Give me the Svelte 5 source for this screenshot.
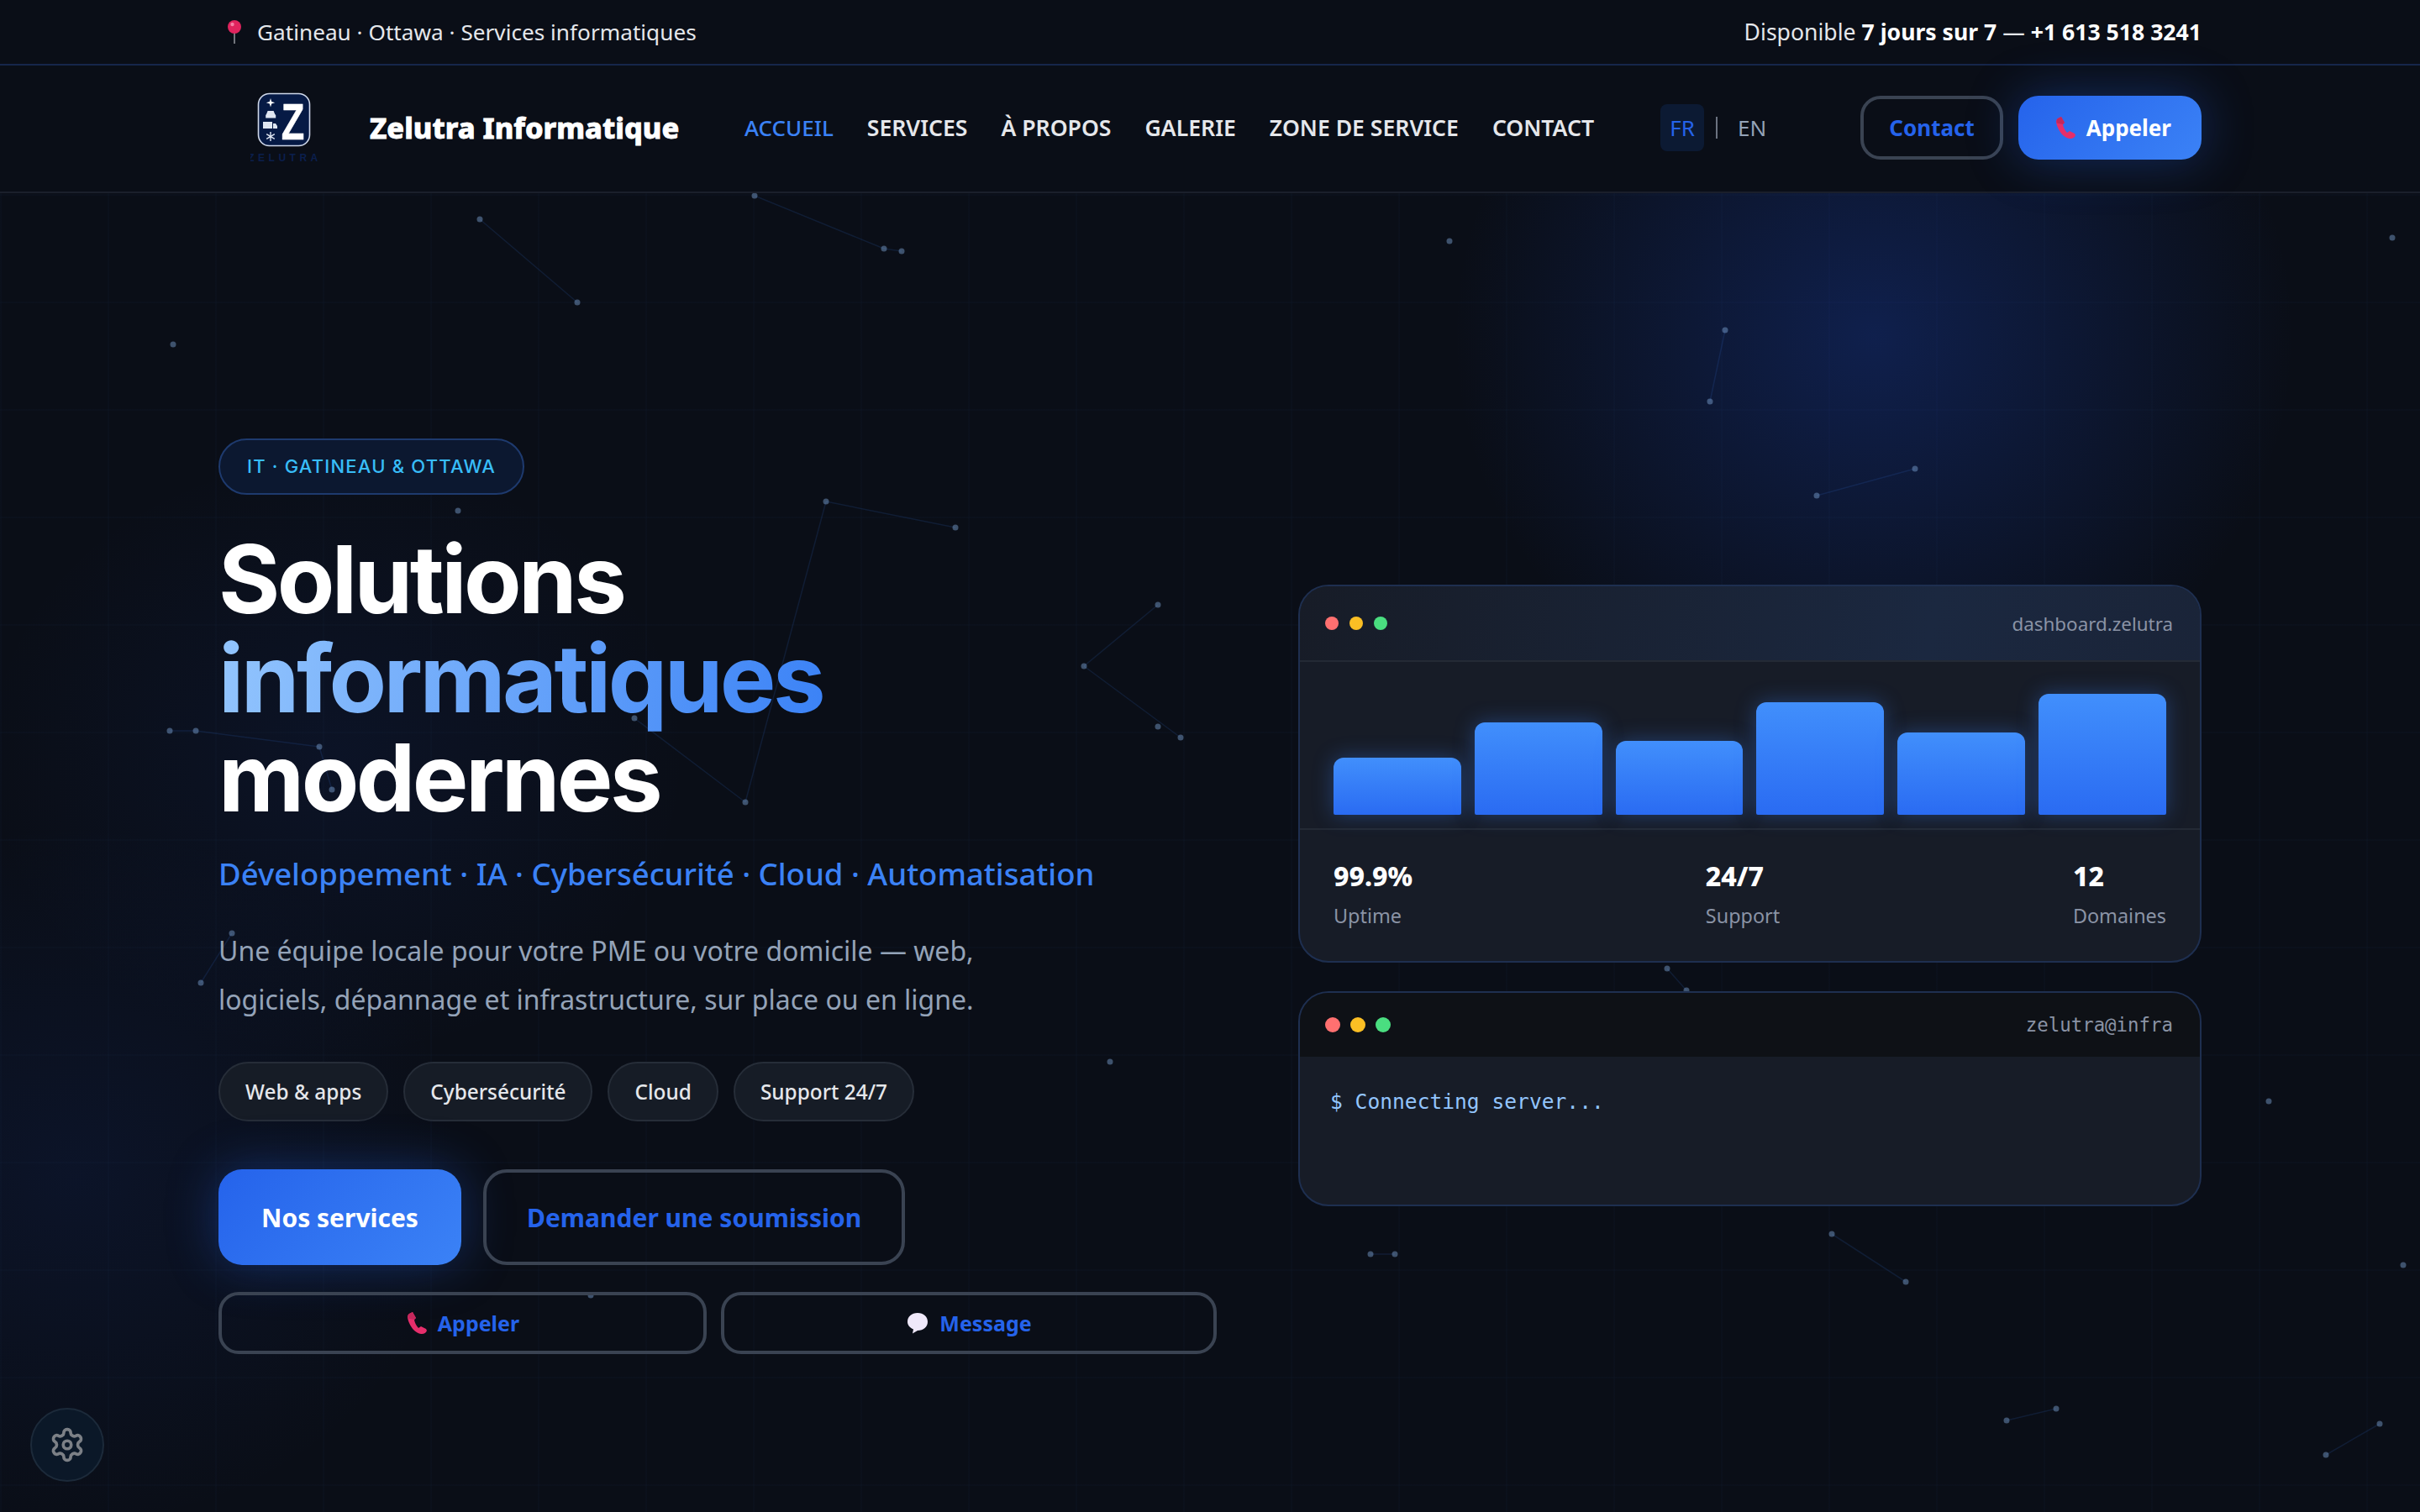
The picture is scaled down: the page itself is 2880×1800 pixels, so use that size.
<script>
  const links = ['ACCUEIL', 'SERVICES', 'À PROPOS', 'GALERIE', 'ZONE DE SERVICE', 'CONTACT'];
  const tags = ['Web & apps', 'Cybersécurité', 'Cloud', 'Support 24/7'];
  const bars = [68, 110, 88, 134, 98, 144];
  const stats = [
    { value: '99.9%', label: 'Uptime' },
    { value: '24/7', label: 'Support' },
    { value: '12', label: 'Domaines' }
  ];

  // network background, coordinates in page pixels
  const nodes = [
    [898, 233], [1052, 296], [1073, 299], [571, 261], [687, 360], [206, 410], [1725, 287], [2847, 283],
    [2053, 393], [2035, 478], [2279, 558], [2162, 590], [983, 597], [1137, 628], [887, 955], [545, 608],
    [1378, 720], [1290, 793], [1405, 878], [1378, 865], [233, 870], [202, 870], [380, 889], [395, 940],
    [755, 855], [276, 1111], [239, 1170], [1321, 1264], [1677, 1109], [1984, 1153], [2007, 1179],
    [2700, 1311], [2562, 1341], [2180, 1469], [2268, 1526], [1631, 1493], [1660, 1493], [2388, 1691], [2447, 1677],
    [2860, 1506], [2832, 1695], [2768, 1732], [703, 1542]
  ];
  const lines = [
    [898, 233, 1052, 296], [1052, 296, 1073, 299], [571, 261, 687, 360], [2053, 393, 2035, 478],
    [2279, 558, 2162, 590], [983, 597, 1137, 628], [983, 597, 887, 955], [1378, 720, 1290, 793],
    [1290, 793, 1405, 878], [202, 870, 233, 870], [233, 870, 380, 889],
    [380, 889, 395, 940], [755, 855, 887, 955], [276, 1111, 239, 1170], [1984, 1153, 2007, 1179],
    [2180, 1469, 2268, 1526], [1631, 1493, 1660, 1493], [2388, 1691, 2447, 1677], [2832, 1695, 2768, 1732]
  ];
</script>

{#snippet pin()}
  <svg class="emoji pin" viewBox="0 0 18 28" width="18" height="28">
    <rect x="8.200" y="12" width="1.600" height="16" fill="#8d8f96" />
    <ellipse cx="9" cy="8" rx="8" ry="8" fill="#e0245e" />
    <circle cx="6.500" cy="5" r="2.200" fill="#f47fa4" />
  </svg>
{/snippet}

{#snippet phone()}
  <svg class="emoji" viewBox="0 0 26 28" width="26" height="28">
    <path d="M8 1 L4 3 C1 5 2 9 4 14 C7 21 12 26 18 27 C21 27.600 24 26 25 23 L24 21 L18 18 L15 20 C12 17 10.500 13 10 10 L12 8 Z" fill="#e62e6b" />
    <path d="M8 1 L4 3 C2.500 4 2.200 6 2.600 8.500 L10 10 L12 8 Z" fill="#c4285c" />
  </svg>
{/snippet}

{#snippet trafficLights()}
  <div class="lights">
    <span class="light red"></span>
    <span class="light yellow"></span>
    <span class="light green"></span>
  </div>
{/snippet}

<div class="page">
  <svg class="network" width="2880" height="1800" viewBox="0 0 2880 1800">
    {#each lines as l}
      <line x1={l[0]} y1={l[1]} x2={l[2]} y2={l[3]} stroke="#3b82f6" stroke-opacity="0.13" stroke-width="1.5" />
    {/each}
    {#each nodes as n}
      <circle cx={n[0]} cy={n[1]} r="3.500" fill="#7fa6d8" fill-opacity="0.45" />
    {/each}
  </svg>

  <div class="topbar">
    <div class="wrap topbar-in">
      <span class="loc">{@render pin()} Gatineau · Ottawa · Services informatiques</span>
      <span class="avail">Disponible <b>7 jours sur 7</b> — <b>+1 613 518 3241</b></span>
    </div>
  </div>

  <header class="nav">
    <div class="wrap nav-in">
      <div class="logo">
        <svg width="90" height="90" viewBox="0 0 90 90">
          <g transform="translate(0 3)">
            <rect x="9.500" y="1.500" width="61" height="62" rx="13" fill="#061a45" stroke="#cfd8ea" stroke-width="1.600" />
            <text transform="translate(50.500 56) scale(0.74 1)" text-anchor="middle" font-family="Liberation Sans" font-weight="700" font-size="61" fill="#fff" stroke="#fff" stroke-width="0.600">Z</text>
            <path d="M24 7 l1.200 4 4 1.200 -4 1.200 -1.200 4 -1.200 -4 -4 -1.200 4 -1.200z" fill="#fff" />
            <path d="M19 26 l1.600 -4 h7 l1.600 4 l1 1 v3.500 h-12 v-3.500z" fill="#dfe6f2" />
            <path d="M15 35 h11 v8 h-11z M27 37 h3 l2 3 v3 h-5z" fill="#dfe6f2" />
            <path d="M24 47 v11 M19.200 49.700 l9.600 5.600 M28.800 49.700 l-9.600 5.600" stroke="#dfe6f2" stroke-width="1.400" />
            <text x="41" y="82" text-anchor="middle" font-family="Liberation Sans" font-size="12" font-weight="700" letter-spacing="4.500" fill="#0b1f4d">ZELUTRA</text>
          </g>
        </svg>
      </div>
      <div class="brand">Zelutra Informatique</div>
      <nav class="links">
        {#each links as link, i}
          <a class:active={i === 0} href="#top">{link}</a>
        {/each}
      </nav>
      <div class="lang">
        <span class="fr">FR</span>
        <span class="sep"></span>
        <span class="en">EN</span>
      </div>
      <div class="nav-actions">
        <button class="btn-outline nav-btn">Contact</button>
        <button class="btn-primary nav-btn">{@render phone()} Appeler</button>
      </div>
    </div>
  </header>

  <main class="wrap hero">
    <section class="left">
      <div class="pill">IT · GATINEAU &amp; OTTAWA</div>
      <h1>Solutions <span class="grad">informatiques</span> modernes</h1>
      <p class="sub">Développement · IA · Cybersécurité · Cloud · Automatisation</p>
      <p class="lead">Une équipe locale pour votre PME ou votre domicile — web,<br />logiciels, dépannage et infrastructure, sur place ou en ligne.</p>
      <div class="tags">
        {#each tags as tag}
          <span class="tag">{tag}</span>
        {/each}
      </div>
      <div class="cta">
        <button class="btn-primary big">Nos services</button>
        <button class="btn-outline big quote">Demander une soumission</button>
      </div>
      <div class="cta-small">
        <button class="btn-outline small">{@render phone()} Appeler</button>
        <button class="btn-outline small msg">
          <svg class="emoji" viewBox="0 0 28 28" width="28" height="28">
            <path d="M14 2 C21 2 26 6.500 26 12.500 C26 18.500 21 23 14 23 L8 26.500 L9 21.500 C4.500 19.500 2 16.500 2 12.500 C2 6.500 7 2 14 2Z" fill="#efe8fa" />
          </svg>
          Message
        </button>
      </div>
    </section>

    <section class="right">
      <div class="card dash">
        <div class="card-head">
          {@render trafficLights()}
          <span class="card-title">dashboard.zelutra</span>
        </div>
        <div class="chart">
          {#each bars as h}
            <div class="bar" style="height:{h}px"></div>
          {/each}
        </div>
        <div class="stats">
          {#each stats as s}
            <div>
              <div class="stat-value">{s.value}</div>
              <div class="stat-label">{s.label}</div>
            </div>
          {/each}
        </div>
      </div>

      <div class="card term">
        <div class="card-head term-head">
          {@render trafficLights()}
          <span class="card-title mono">zelutra@infra</span>
        </div>
        <div class="term-body">$ Connecting server...</div>
      </div>
    </section>
  </main>

  <button class="gear" aria-label="Réglages">
    <svg width="44" height="44" viewBox="0 0 24 24" fill="none" stroke="#7c8086" stroke-width="2" stroke-linecap="round" stroke-linejoin="round">
      <path d="M12.220 2h-.44a2 2 0 0 0-2 2v.18a2 2 0 0 1-1 1.730l-.43.25a2 2 0 0 1-2 0l-.15-.08a2 2 0 0 0-2.730.73l-.22.38a2 2 0 0 0 .73 2.730l.15.1a2 2 0 0 1 1 1.720v.51a2 2 0 0 1-1 1.740l-.15.09a2 2 0 0 0-.73 2.730l.22.38a2 2 0 0 0 2.730.73l.15-.08a2 2 0 0 1 2 0l.43.25a2 2 0 0 1 1 1.730V20a2 2 0 0 0 2 2h.44a2 2 0 0 0 2-2v-.18a2 2 0 0 1 1-1.730l.43-.25a2 2 0 0 1 2 0l.15.08a2 2 0 0 0 2.730-.73l.22-.39a2 2 0 0 0-.73-2.730l-.15-.08a2 2 0 0 1-1-1.740v-.5a2 2 0 0 1 1-1.740l.15-.09a2 2 0 0 0 .73-2.730l-.22-.38a2 2 0 0 0-2.730-.73l-.15.08a2 2 0 0 1-2 0l-.43-.25a2 2 0 0 1-1-1.730V4a2 2 0 0 0-2-2z" />
      <circle cx="12" cy="12" r="2.600" />
    </svg>
  </button>
</div>

<style>
  :global(body) {
    margin: 0;
    background: #0a0e17;
  }

  .page {
    position: relative;
    height: 1800px;
    overflow: hidden;
    color: #fff;
    font-family: "Noto Sans", "Open Sans", sans-serif;
    background:
      linear-gradient(rgba(59, 130, 246, 0.018) 2px, transparent 2px) 0 231px / 128px 128px,
      linear-gradient(90deg, rgba(59, 130, 246, 0.018) 2px, transparent 2px) 0 0 / 128px 128px,
      radial-gradient(500px 480px at 2230px 400px, rgba(29, 78, 216, 0.28), transparent 100%),
      radial-gradient(460px 420px at 90px 1400px, rgba(29, 78, 216, 0.09), transparent 100%),
      radial-gradient(420px 360px at 400px 900px, rgba(29, 78, 216, 0.08), transparent 100%),
      #0a0e17;
  }

  .network {
    position: absolute;
    inset: 0;
  }

  .wrap {
    position: relative;
    width: 2360px;
    margin: 0 auto;
  }

  .emoji {
    flex: none;
  }

  button {
    font-family: inherit;
    cursor: pointer;
  }

  .topbar {
    position: relative;
    height: 76px;
    border-bottom: 2px solid #16264a;
    background: #0a0e17;
    font-size: 26.2px;
    color: #e5e7eb;
  }

  .topbar-in {
    height: 100%;
    display: flex;
    align-items: center;
    justify-content: space-between;
  }

  .avail {
    font-size: 26.6px;
  }

  .topbar b {
    font-weight: 700;
    color: #fff;
  }

  .loc {
    display: flex;
    align-items: center;
    gap: 18px;
  }

  .pin {
    margin-left: 10px;
  }

  .nav {
    position: relative;
    height: 150px;
    border-bottom: 2px solid #1a1f2b;
    background: #0a0e17;
  }

  .nav-in {
    height: 100%;
    box-sizing: border-box;
    padding-bottom: 3px;
    display: flex;
    align-items: center;
  }

  .logo {
    width: 180px;
    height: 90px;
    padding-left: 38px;
    box-sizing: border-box;
  }

  .brand {
    font-size: 34.3px;
    font-weight: 800;
    -webkit-text-stroke: 0.8px #fff;
    width: 446px;
  }

  .links {
    display: flex;
    gap: 40px;
  }

  .links a {
    font-size: 26.6px;
    font-weight: 600;
    color: #e5e7eb;
    text-decoration: none;
  }

  .links a.active {
    font-size: 26px;
    font-weight: 500;
    color: #3b82f6;
  }

  .lang {
    display: flex;
    align-items: center;
    margin-left: 79px;
    font-size: 26px;
  }

  .fr {
    width: 52px;
    height: 56px;
    display: flex;
    align-items: center;
    justify-content: center;
    border-radius: 8px;
    background: #0c1a33;
    color: #2563eb;
  }

  .sep {
    width: 2px;
    height: 26px;
    margin: 0 24px 0 14px;
    background: #6b7280;
  }

  .en {
    color: #94a3b8;
  }

  .nav-actions {
    margin-left: auto;
    display: flex;
    gap: 18px;
  }

  .btn-outline {
    border: 4px solid #3a4352;
    background: transparent;
    color: #2563eb;
    font-weight: 700;
  }

  .btn-primary {
    border: none;
    background: linear-gradient(135deg, #2563eb, #3b82f6);
    color: #fff;
    font-weight: 700;
    box-shadow: 0 0 60px rgba(37, 99, 235, 0.35);
  }

  .nav-btn {
    height: 76px;
    padding: 0 30px;
    border-radius: 24px;
    font-size: 26px;
    display: flex;
    align-items: center;
    gap: 12px;
  }

  .nav-btn.btn-primary {
    padding: 0 36px 0 43px;
  }

  .hero {
    display: grid;
    grid-template-columns: 1188px 1075px;
    justify-content: space-between;
    align-items: center;
    padding-top: 292px;
  }

  .right {
    padding-bottom: 2px;
  }

  .pill {
    display: inline-block;
    height: 67px;
    line-height: 63px;
    box-sizing: border-box;
    padding: 0 32px;
    border: 2px solid #1e3a6e;
    border-radius: 34px;
    background: #0c1830;
    color: #38bdf8;
    font-family: Inter, sans-serif;
    font-size: 22px;
    font-weight: 500;
    letter-spacing: 1.2px;
  }

  h1 {
    width: 800px;
    margin: 41px 0 0;
    font-family: Inter, sans-serif;
    font-size: 112px;
    font-weight: 700;
    line-height: 118px;
    letter-spacing: -0.032em;
  }

  .grad {
    background: linear-gradient(100deg, #93c5fd, #3b82f6);
    -webkit-background-clip: text;
    background-clip: text;
    color: transparent;
  }

  .sub {
    margin: 31px 0 0;
    font-size: 36.5px;
    font-weight: 500;
    color: #3b82f6;
  }

  .lead {
    margin: 38px 0 0;
    font-size: 32px;
    line-height: 58px;
    color: #94a3b8;
  }

  .tags {
    display: flex;
    gap: 18px;
    margin-top: 45px;
  }

  .tag {
    height: 71px;
    line-height: 67px;
    box-sizing: border-box;
    padding: 0 30px;
    border: 2px solid #262d38;
    border-radius: 36px;
    background: #161c26;
    font-size: 24.4px;
    font-weight: 500;
    color: #e5e7eb;
  }

  .cta {
    display: flex;
    gap: 26px;
    margin-top: 57px;
  }

  .big {
    height: 114px;
    padding: 0 48px;
    border-radius: 28px;
    font-size: 30px;
  }

  .btn-primary.big {
    padding: 0 51px;
  }

  .cta-small {
    display: grid;
    grid-template-columns: 581px 590px;
    gap: 17px;
    margin-top: 32px;
  }

  .small {
    height: 74px;
    border-radius: 24px;
    font-size: 25px;
    display: flex;
    align-items: center;
    justify-content: center;
    gap: 12px;
  }

  .card {
    border: 2px solid #1e2f50;
    border-radius: 36px;
    background: #171c27;
    overflow: hidden;
  }

  .card-head {
    height: 88px;
    padding: 0 32px 0 30px;
    display: flex;
    align-items: center;
    justify-content: space-between;
    border-bottom: 2px solid #242a35;
    background: linear-gradient(100deg, #171c27, #1b2840 70%, #1a2438);
  }

  .lights {
    display: flex;
    gap: 13px;
  }

  .light {
    width: 16px;
    height: 16px;
    border-radius: 50%;
  }

  .red {
    background: #ff7070;
  }

  .yellow {
    background: #fbbf24;
  }

  .green {
    background: #4ade80;
  }

  .card-title {
    font-size: 22.4px;
    color: #8a93a5;
  }

  .chart {
    height: 200px;
    padding: 0 40px 16px;
    box-sizing: border-box;
    display: flex;
    align-items: flex-end;
    gap: 16px;
    border-bottom: 2px solid #242a35;
  }

  .bar {
    flex: 1;
    border-radius: 12px 12px 2px 2px;
    background: linear-gradient(180deg, #418ffc, #2a6bf2);
    box-shadow: 0 0 24px rgba(59, 130, 246, 0.35);
  }

  .stats {
    height: 156px;
    padding: 0 40px 4px;
    box-sizing: border-box;
    display: flex;
    align-items: center;
    justify-content: space-between;
  }

  .stat-value {
    font-size: 32px;
    font-weight: 800;
    line-height: 46px;
  }

  .stat-label {
    margin-top: 6px;
    font-size: 23.4px;
    line-height: 36px;
    color: #8a93a5;
  }

  .term {
    margin-top: 34px;
    height: 256px;
    box-sizing: border-box;
  }

  .term-head {
    height: 76px;
    border-bottom: none;
    background: #0e1116;
  }

  .term .light {
    width: 18px;
    height: 18px;
  }

  .term .lights {
    gap: 12px;
  }

  .mono {
    font-family: "DejaVu Sans Mono", "Liberation Mono", monospace;
  }

  .term-body {
    padding: 39px 36px;
    font-family: "DejaVu Sans Mono", "Liberation Mono", monospace;
    font-size: 24.6px;
    color: #93c5fd;
  }

  .gear {
    position: absolute;
    left: 36px;
    bottom: 36px;
    width: 88px;
    height: 88px;
    padding: 0;
    display: flex;
    align-items: center;
    justify-content: center;
    border: 2px solid #1c2a3a;
    border-radius: 50%;
    background: #0b1828;
  }
</style>
